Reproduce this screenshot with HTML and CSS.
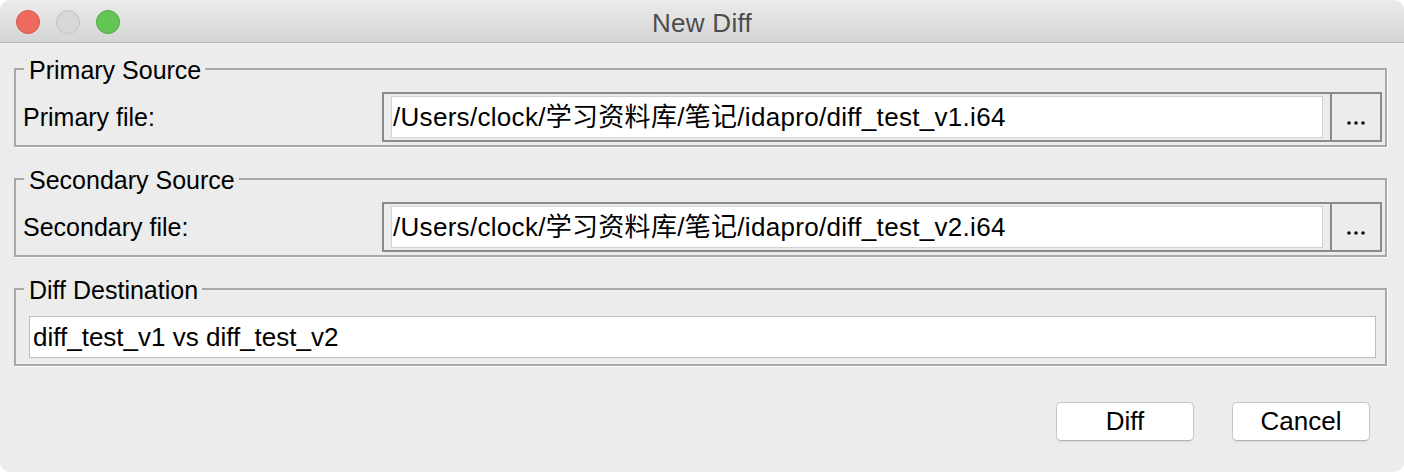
FILE: index.html
```html
<!DOCTYPE html>
<html>
<head>
<meta charset="utf-8">
<title>New Diff</title>
<link rel="stylesheet" href="styles.css">
</head>
<body>
<div class="window">
  <div class="titlebar">
    <div class="lights">
      <span class="light red"></span>
      <span class="light gray"></span>
      <span class="light green"></span>
    </div>
    <div class="title">New Diff</div>
    <div></div>
  </div>
  <div class="content">
    <fieldset class="group">
      <legend>Primary Source</legend>
      <div class="row">
        <span class="label">Primary file:</span>
        <div class="filebox">
          <div class="pathwrap"><div class="pathinput">/Users/clock/学习资料库/笔记/idapro/diff_test_v1.i64</div></div>
          <div class="browse"><svg class="dots" width="18" height="4" viewBox="0 0 18 4"><circle cx="2" cy="2" r="1.8"/><circle cx="9" cy="2" r="1.8"/><circle cx="16" cy="2" r="1.8"/></svg></div>
        </div>
      </div>
    </fieldset>
    <fieldset class="group">
      <legend>Secondary Source</legend>
      <div class="row">
        <span class="label">Secondary file:</span>
        <div class="filebox">
          <div class="pathwrap"><div class="pathinput">/Users/clock/学习资料库/笔记/idapro/diff_test_v2.i64</div></div>
          <div class="browse"><svg class="dots" width="18" height="4" viewBox="0 0 18 4"><circle cx="2" cy="2" r="1.8"/><circle cx="9" cy="2" r="1.8"/><circle cx="16" cy="2" r="1.8"/></svg></div>
        </div>
      </div>
    </fieldset>
    <fieldset class="group dest">
      <legend>Diff Destination</legend>
      <div class="destinput">diff_test_v1 vs diff_test_v2</div>
    </fieldset>
    <div class="buttons">
      <button class="btn">Diff</button>
      <button class="btn">Cancel</button>
    </div>
  </div>
</div>
</body>
</html>
```
FILE: styles.css
```css
* { box-sizing: border-box; }
html, body { margin: 0; padding: 0; background: #ffffff; }
body {
  font-family: "Liberation Sans", "Noto Sans CJK SC", sans-serif;
  font-size: 25px;
  color: #000;
}
.window {
  width: 1404px;
  height: 472px;
  background: #ececec;
  border-radius: 10px;
  overflow: hidden;
  display: flex;
  flex-direction: column;
}
.titlebar {
  height: 43px;
  flex: 0 0 43px;
  display: grid;
  grid-template-columns: 1fr auto 1fr;
  align-items: center;
  background: linear-gradient(#ebebeb, #d5d5d5);
  border-bottom: 1px solid #b9b9b9;
}
.lights {
  display: flex;
  gap: 16px;
  padding-left: 16px;
  padding-top: 1px;
}
.light {
  width: 24px;
  height: 24px;
  border-radius: 50%;
  display: block;
}
.red { background: #ee6a5f; border: 1px solid #d6564c; }
.gray { background: #d7d7d7; border: 1px solid #c2c2c2; }
.green { background: #62c554; border: 1px solid #50a941; }
.title {
  color: #4d4d4d;
  font-size: 26px;
  line-height: 30px;
  padding-top: 3px;
  letter-spacing: 0.3px;
}
.content {
  padding: 11px 17px 0 14px;
  display: flex;
  flex-direction: column;
}
.group {
  margin: 0 0 17px 0;
  border: 2px solid #a8a8a8;
  box-shadow: 1px 1px 0 #ffffff;
  padding: 8px 3px 3px 7px;
  min-width: 0;
}
.group legend {
  font-size: 25px;
  line-height: 27px;
  padding: 3px 4px 0 5px;
  margin-left: 1px;
}
.row {
  display: flex;
  align-items: center;
}
.label {
  flex: 0 0 359px;
  padding-top: 1px;
}
.filebox {
  flex: 1;
  display: flex;
  height: 50px;
}
.pathwrap {
  flex: 1;
  border: 2px solid #8a8a8a;
  padding: 2px 7px 2px 7px;
  background: #ececec;
}
.pathinput {
  height: 42px;
  background: #ffffff;
  border: 1px solid #d3d3d3;
  font-size: 26px;
  line-height: 40px;
  padding-left: 1px;
  letter-spacing: 0.3px;
  white-space: nowrap;
}
.browse {
  flex: 0 0 50px;
  border: 2px solid #8a8a8a;
  border-left: none;
  background: #ececec;
  display: flex;
  align-items: center;
  justify-content: center;
}
.dots {
  display: block;
  margin-top: 12px;
  fill: #111;
}
.group.dest {
  padding: 12px 9px 6px 7px;
  margin-bottom: 0;
}
.destinput {
  margin-left: 6px;
  height: 42px;
  background: #ffffff;
  border: 1px solid #bdbdbd;
  font-size: 26px;
  line-height: 40px;
  padding-left: 3px;
}
.buttons {
  display: flex;
  justify-content: flex-end;
  gap: 38px;
  margin-top: 36px;
  margin-right: 17px;
}
.btn {
  width: 138px;
  height: 39px;
  background: #ffffff;
  border: 1px solid #c6c6c6;
  border-bottom-color: #b3b3b3;
  border-radius: 5px;
  box-shadow: 0 1px 1px rgba(0,0,0,0.08);
  font-family: "Liberation Sans", sans-serif;
  font-size: 26px;
  color: #000;
  padding: 0;
}
```
